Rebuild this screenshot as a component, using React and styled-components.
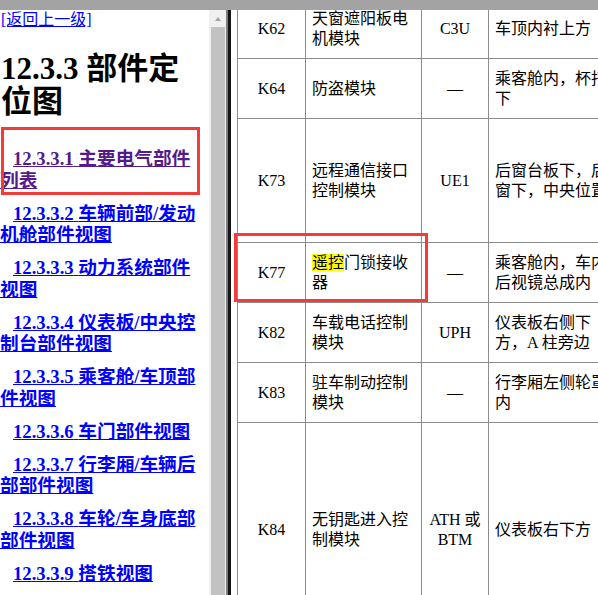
import React from "react";
import styled, { createGlobalStyle } from "styled-components";

const FONT = `"Liberation Serif", "Noto Sans CJK SC", serif`;
const RULE = "#8c8c8c";
const CALLOUT = "#f23b3b";

const Global = createGlobalStyle`
  html, body { margin: 0; padding: 0; background: #fff; overflow: hidden; }
  body { font-family: ${FONT}; color: #000; }
`;

const Viewer = styled.div`
  width: 598px;
  height: 595px;
  display: flex;
  flex-direction: column;
  overflow: hidden;
  background: #fff;
`;

const TopStrip = styled.div`
  height: 10px;
  flex: none;
  background: #a3a3a3;
`;

const Frames = styled.div`
  flex: 1;
  min-height: 0;
  display: flex;
`;

/* ---------- left navigation frame ---------- */

const NavPane = styled.nav`
  width: 209px;
  flex: none;
  box-sizing: border-box;
  padding: 0 4px 0 0;
  overflow: hidden;
`;

const BackLink = styled.a`
  display: inline-block;
  margin-left: 1px;
  font-size: 16px;
  line-height: 20px;
  color: #0000ff;
  text-decoration: underline;
`;

const Title = styled.h1`
  margin: 22px 0 30px 1px;
  font-size: 31px;
  line-height: 33px;
  font-weight: bold;
`;

const LinkItem = styled.p`
  position: relative;
  margin: 0 0 11.5px;
  text-indent: 13px;
  font-size: 18.67px;
  line-height: 21.5px;
  font-weight: bold;

  a {
    color: ${(p) => (p.$visited ? "#551a8b" : "#0000ff")};
    text-decoration: underline;
  }

  ${(p) =>
    p.$callout &&
    `
    &::after {
      content: "";
      position: absolute;
      top: -21px;
      left: 1px;
      right: 5px;
      bottom: -4px;
      border: 3px solid ${CALLOUT};
      pointer-events: none;
    }
  `}
`;

/* ---------- scrollbar + frame splitter ---------- */

const ScrollTrack = styled.div`
  width: 17px;
  flex: none;
  box-sizing: border-box;
  padding: 7px 1px 0 2px;
  background: #f0f0f0;
  display: flex;
  flex-direction: column;
  align-items: center;
`;

const ScrollArrow = styled.div`
  width: 0;
  height: 0;
  border-left: 3.5px solid transparent;
  border-right: 3.5px solid transparent;
  border-bottom: 4px solid #a3a3a3;
`;

const ScrollThumb = styled.div`
  align-self: stretch;
  flex: 1;
  margin-top: 6px;
  background: #c2c2c2;
`;

const Splitter = styled.div`
  width: 5px;
  flex: none;
  box-sizing: border-box;
  border-left: 2px solid #7c7c7c;
  background: #141414;
`;

/* ---------- right content frame: parts table ---------- */

const ContentPane = styled.main`
  flex: 1;
  min-width: 0;
  overflow: hidden;
  padding-left: 6px;
`;

const PartsTable = styled.div`
  margin-top: -11px;
  width: max-content;
  border-left: 1px solid ${RULE};
`;

const Row = styled.div`
  position: relative;
  display: grid;
  grid-template-columns: 68px 116px 67px 133px;
  height: ${(p) => p.$h}px;
  box-sizing: border-box;
  border-bottom: 1px solid ${RULE};

  ${(p) =>
    p.$callout &&
    `
    &::after {
      content: "";
      position: absolute;
      top: -10px;
      left: -4px;
      width: 194px;
      bottom: 0;
      box-sizing: border-box;
      border: 3px solid ${CALLOUT};
      pointer-events: none;
    }
  `}
`;

const Cell = styled.div`
  display: flex;
  align-items: center;
  justify-content: ${(p) => (p.$center ? "center" : "flex-start")};
  text-align: ${(p) => (p.$center ? "center" : "left")};
  padding: 0 ${(p) => (p.$tight ? 3 : 6)}px;
  border-right: 1px solid ${RULE};
  font-size: 16px;
  line-height: 20px;
  min-width: 0;
`;

const CellText = styled.div`
  min-width: 0;
`;

const Mark = styled.span`
  background: #ffff00;
`;

const links = [
  { n: "12.3.3.1", t: "主要电气部件列表", visited: true, callout: true },
  { n: "12.3.3.2", t: "车辆前部/发动机舱部件视图" },
  { n: "12.3.3.3", t: "动力系统部件视图" },
  { n: "12.3.3.4", t: "仪表板/中央控制台部件视图" },
  { n: "12.3.3.5", t: "乘客舱/车顶部件视图" },
  { n: "12.3.3.6", t: "车门部件视图" },
  { n: "12.3.3.7", t: "行李厢/车辆后部部件视图" },
  { n: "12.3.3.8", t: "车轮/车身底部部件视图" },
  { n: "12.3.3.9", t: "搭铁视图" },
];

const parts = [
  { id: "K62", name: "天窗遮阳板电机模块", code: "C3U", loc: "车顶内衬上方", h: 60 },
  { id: "K64", name: "防盗模块", code: "—", loc: "乘客舱内，杯托下", h: 60 },
  { id: "K73", name: "远程通信接口控制模块", code: "UE1", loc: "后窗台板下，后窗下，中央位置", h: 124 },
  {
    id: "K77",
    name: (
      <>
        <Mark>遥控</Mark>门锁接收器
      </>
    ),
    code: "—",
    loc: "乘客舱内，车内后视镜总成内",
    h: 60,
    callout: true,
  },
  { id: "K82", name: "车载电话控制模块", code: "UPH", loc: "仪表板右侧下方，A 柱旁边", h: 60 },
  { id: "K83", name: "驻车制动控制模块", code: "—", loc: "行李厢左侧轮罩内", h: 60 },
  { id: "K84", name: "无钥匙进入控制模块", code: "ATH 或 BTM", loc: "仪表板右下方", h: 214 },
];

export default function App() {
  return (
    <>
      <Global />
      <Viewer>
        <TopStrip />
        <Frames>
          <NavPane>
            <BackLink href="#">[返回上一级]</BackLink>
            <Title>12.3.3 部件定位图</Title>
            {links.map((l) => (
              <LinkItem key={l.n} $visited={l.visited} $callout={l.callout}>
                <a href="#">
                  {l.n} {l.t}
                </a>
              </LinkItem>
            ))}
          </NavPane>
          <ScrollTrack>
            <ScrollArrow />
            <ScrollThumb />
          </ScrollTrack>
          <Splitter />
          <ContentPane>
            <PartsTable>
              {parts.map((p) => (
                <Row key={p.id} $h={p.h} $callout={p.callout}>
                  <Cell $center>
                    <CellText>{p.id}</CellText>
                  </Cell>
                  <Cell>
                    <CellText>{p.name}</CellText>
                  </Cell>
                  <Cell $center $tight>
                    <CellText>{p.code}</CellText>
                  </Cell>
                  <Cell>
                    <CellText>{p.loc}</CellText>
                  </Cell>
                </Row>
              ))}
            </PartsTable>
          </ContentPane>
        </Frames>
      </Viewer>
    </>
  );
}
